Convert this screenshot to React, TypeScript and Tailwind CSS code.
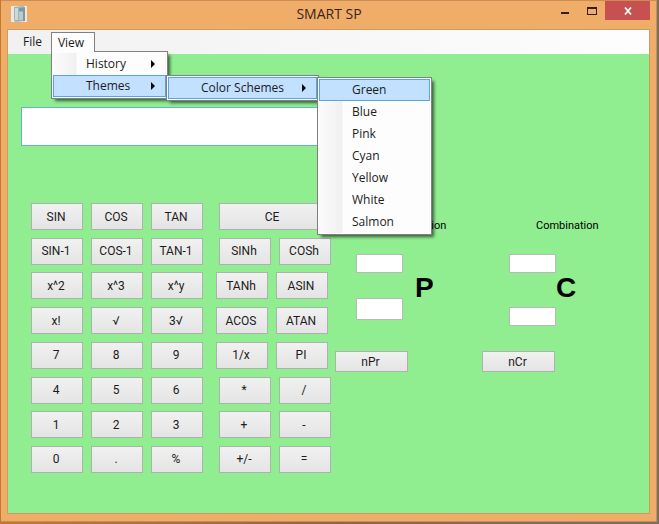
import type { ReactNode } from "react";

const scientificKeys = [
  "SIN", "COS", "TAN",
  "SIN-1", "COS-1", "TAN-1",
  "x^2", "x^3", "x^y",
  "x!", "√", "3√",
  "7", "8", "9",
  "4", "5", "6",
  "1", "2", "3",
  "0", ".", "%",
];

const operatorRows = [
  { keys: ["CE"], wide: true, inset: true },
  { keys: ["SINh", "COSh"], inset: true },
  { keys: ["TANh", "ASIN"], inset: false },
  { keys: ["ACOS", "ATAN"], inset: false },
  { keys: ["1/x", "PI"], inset: false },
  { keys: ["*", "/"], inset: true },
  { keys: ["+", "-"], inset: true },
  { keys: ["+/-", "="], inset: true },
];

const colors = ["Green", "Blue", "Pink", "Cyan", "Yellow", "White", "Salmon"];

function Key({ label, wide }: { label: string; wide?: boolean }) {
  return (
    <button
      type="button"
      className={`h-[27px] border border-[#acb2ac] bg-linear-to-b from-[#f1f1f1] to-[#e4e4e4] pr-0.5 text-center font-[Roboto,sans-serif] text-xs leading-4 text-[#1c1c1c] ${wide ? "w-28 pr-1.5" : "w-[52px]"}`}
    >
      {label}
    </button>
  );
}

function Popup({ className, children }: { className: string; children: ReactNode }) {
  return (
    <ul
      role="menu"
      className={`absolute border border-[#808080] bg-[#fdfdfd] p-px shadow-[3px_3px_3px_-1px_rgba(0,0,0,0.6)] ${className}`}
    >
      {children}
    </ul>
  );
}

function MenuItem({
  label,
  active,
  arrow,
  children,
}: {
  label: string;
  active?: boolean;
  arrow?: boolean;
  children?: ReactNode;
}) {
  return (
    <li role="none" className="relative">
      <button
        type="button"
        role="menuitem"
        className={`flex h-[22px] w-full items-center justify-between border pr-2.5 pl-8 text-left ${
          active
            ? "border-[#5aa5e0] bg-[#c2e0ff]"
            : "border-transparent bg-linear-to-r from-[#fbfbfb] from-0% via-[#f0f0f0] via-[22px] to-[#fdfdfd] to-[23px]"
        }`}
      >
        {label}
        {arrow && (
          <svg className="h-2 w-1" viewBox="0 0 4 8" aria-hidden="true">
            <path d="M0 0L4 4L0 8Z" fill="#000" />
          </svg>
        )}
      </button>
      {children}
    </li>
  );
}

function Counter({
  title,
  letter,
  action,
  titleClass,
  fieldsClass,
  secondClass,
  letterClass,
}: {
  title: string;
  letter: string;
  action: string;
  titleClass: string;
  fieldsClass: string;
  secondClass: string;
  letterClass: string;
}) {
  const field = "w-[47px] border border-[#b4bcb4] bg-white px-1 text-xs";
  return (
    <section className="w-[147px] pt-[15px] text-black">
      <h2 className={`font-[Roboto,sans-serif] text-[11px] leading-4 ${titleClass}`}>{title}</h2>
      <div className={`mt-5 flex h-[97px] items-start ${fieldsClass}`}>
        <div className="flex flex-col">
          <input aria-label={`${title} n`} className={`h-[19px] ${field}`} />
          <input aria-label={`${title} r`} className={`${secondClass} ${field}`} />
        </div>
        <span className={`mt-[18px] text-[28px] leading-8 font-bold ${letterClass}`}>{letter}</span>
      </div>
      <button
        type="button"
        className="block h-[21px] w-[73px] border border-[#acb2ac] bg-linear-to-b from-[#f1f1f1] to-[#e4e4e4] pr-0.5 font-[Roboto,sans-serif] text-xs leading-4 text-[#1c1c1c]"
      >
        {action}
      </button>
    </section>
  );
}

export default function App() {
  return (
    <div className="flex min-h-screen bg-linear-to-r from-[#c07a30] via-[#8a6a48] to-[#79705f] pr-0.5 pb-0.5 pl-px font-['Liberation_Sans',Arial,sans-serif]">
      <main className="flex flex-1 flex-col border-t border-r border-b border-[#c98d55] bg-[#f0ad69] px-1.5 pb-[7px]">
        <header className="flex h-7 items-start">
          <svg className="mt-[5px] ml-1 h-4 w-4" viewBox="0 0 16 16" aria-hidden="true">
            <rect width="16" height="16" fill="#ece9e2" />
            <path d="M3 1L12 0L14 2V15L4 16L3 14Z" fill="#9fb2b5" />
            <path d="M4 2H7V14H4Z" fill="#c9dadd" />
            <path d="M8 2H12V5H8Z" fill="#6f9fb2" />
            <path d="M8 7H12M8 9H12M8 11H12M8 13H12" stroke="#d7e3e4" />
            <path d="M13 1V15" stroke="#6b7d81" />
          </svg>
          <h1 className="mt-[3px] flex-1 pl-20 text-center font-['Open_Sans',sans-serif] text-sm leading-5 text-[#35261a]">
            SMART SP
          </h1>
          <button type="button" aria-label="Minimize" className="flex h-[19px] w-[27px] items-center justify-center">
            <svg className="h-2.5 w-2" viewBox="0 0 8 10" aria-hidden="true">
              <path d="M0 6H8V8H0Z" fill="#32200f" />
            </svg>
          </button>
          <button type="button" aria-label="Maximize" className="flex h-[19px] w-[27px] items-center justify-center">
            <svg className="h-2 w-2.5" viewBox="0 0 10 8" aria-hidden="true">
              <path d="M0 0H10V8H0ZM1 2V7H9V2Z" fill="#32200f" fillRule="evenodd" />
            </svg>
          </button>
          <button type="button" aria-label="Close" className="flex h-[19px] w-[45px] items-center justify-center bg-[#c75050]">
            <svg className="h-2 w-2" viewBox="0 0 8 8" aria-hidden="true">
              <path d="M1 0.5L7 7.5M7 0.5L1 7.5" stroke="#fff" strokeWidth="1.7" />
            </svg>
          </button>
        </header>

        <div className="flex flex-1 flex-col border border-[#cd9c60] bg-[#90ee90]">
          <nav className="flex h-6 items-start bg-linear-to-r from-[#f1f1f1] to-[#fdfdfd] pt-0.5 font-['Open_Sans',sans-serif] text-xs leading-4 text-[#1c1c1c]">
            <button type="button" className="ml-1.5 h-5 w-[37px]">
              File
            </button>
            <div className="relative">
              <button
                type="button"
                aria-expanded="true"
                className="relative z-10 h-5 w-11 border border-b-0 border-[#808080] bg-[#fdfdfd] pr-1"
              >
                View
              </button>
              <Popup className="top-[19px] left-0 w-[117px]">
                <MenuItem label="History" arrow />
                <MenuItem label="Themes" arrow active>
                  <Popup className="top-0 left-full w-[153px]">
                    <MenuItem label="Color Schemes" arrow active>
                      <Popup className="top-0 left-full w-[115px]">
                        {colors.map((color) => (
                          <MenuItem key={color} label={color} active={color === "Green"} />
                        ))}
                      </Popup>
                    </MenuItem>
                  </Popup>
                </MenuItem>
              </Popup>
            </div>
          </nav>

          <div className="px-[13px] pt-[53px]">
            <input
              aria-label="Display"
              className="block h-[39px] w-[309px] border border-[#67b5c0] bg-white px-2 text-right text-xl"
            />
          </div>

          <div className="mt-[57px] flex items-start pl-[23px]">
            <div className="grid h-[270px] shrink-0 grid-cols-3 content-between gap-x-2">
              {scientificKeys.map((key) => (
                <Key key={key} label={key} />
              ))}
            </div>
            <div className="ml-[13px] flex h-[270px] w-[119px] shrink-0 flex-col justify-between">
              {operatorRows.map((row) => (
                <div key={row.keys[0]} className={`flex gap-2 ${row.inset ? "pl-[3px]" : ""}`}>
                  {row.keys.map((key) => (
                    <Key key={key} label={key} wide={row.wide} />
                  ))}
                </div>
              ))}
            </div>
            <Counter
              title="Permutation"
              letter="P"
              action="nPr"
              titleClass="pl-[51px]"
              fieldsClass="pl-[21px]"
              secondClass="mt-[25px] h-[22px]"
              letterClass="ml-3"
            />
            <Counter
              title="Combination"
              letter="C"
              action="nCr"
              titleClass="pl-[54px]"
              fieldsClass="pl-[27px]"
              secondClass="mt-[34px] h-[19px]"
              letterClass="ml-0"
            />
          </div>
        </div>
      </main>
    </div>
  );
}
